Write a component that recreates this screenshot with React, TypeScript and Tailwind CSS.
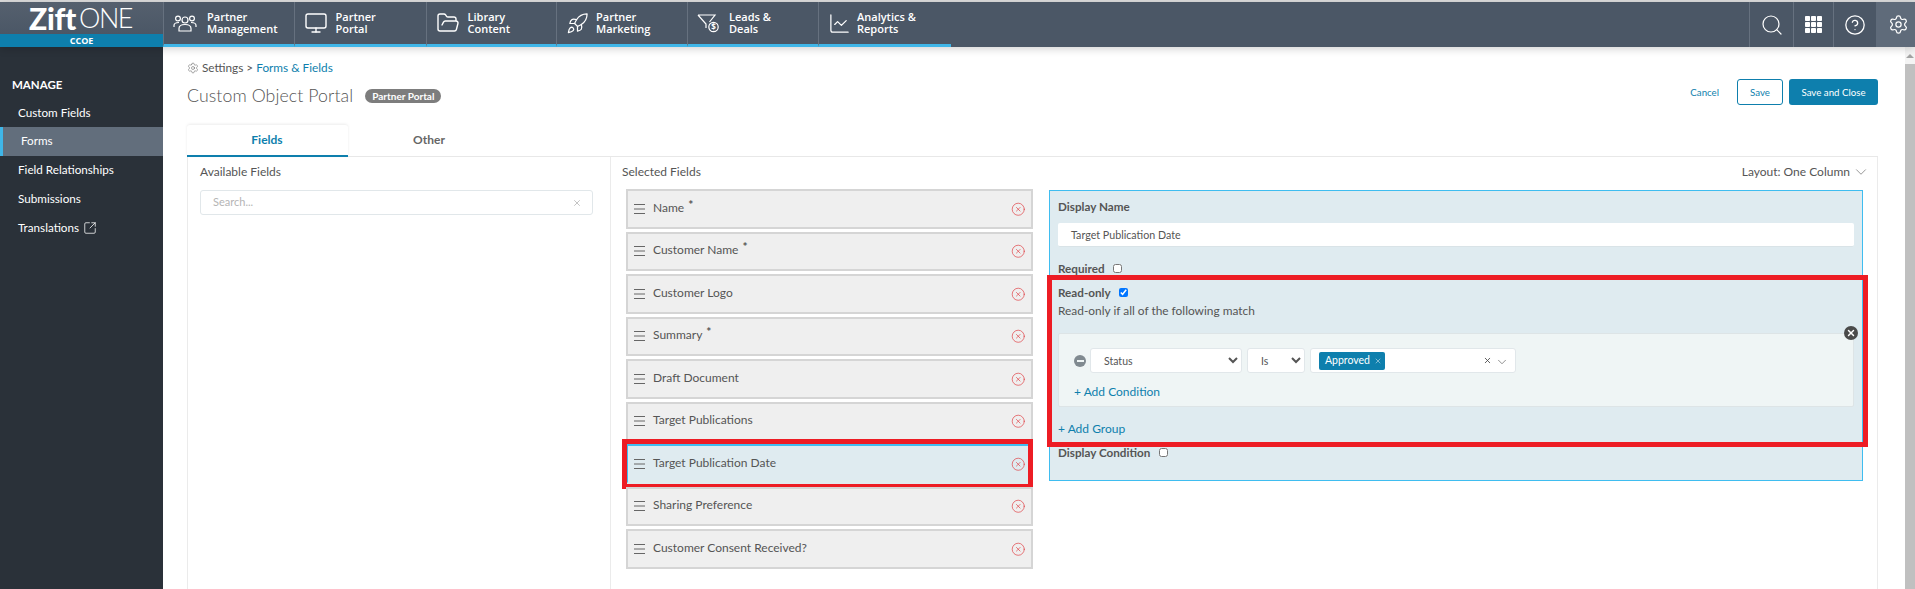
import React from "react";
import { Monitor, FolderOpen, Rocket, ChartLine, Search, CircleHelp, Settings, CircleX, SquareArrowOutUpRight, ChevronDown, X } from "lucide-react";

function PeopleIcon() {
  return (
    <svg width="24" height="20" viewBox="0 0 24 20" fill="none" stroke="#fff" strokeWidth="1.2">
      <circle cx="5" cy="5.5" r="2.4" /><circle cx="19" cy="5.5" r="2.4" /><circle cx="12" cy="7" r="3" />
      <path d="M6 18v-2.5c0-2.5 2.5-4 6-4s6 1.5 6 4V18z" />
      <path d="M1 14v-1.5C1 10.500 3 9.500 6 9.500M23 14v-1.500c0-2-2-3-5-3" />
    </svg>
  );
}
function FunnelIcon() {
  return (
    <svg width="22" height="20" viewBox="0 0 22 20" fill="none" stroke="#fff" strokeWidth="1.2">
      <path d="M1 2h17l-5.500 7M1 2l8 9v4" />
      <circle cx="16.500" cy="14" r="4.700" />
      <text x="16.500" y="17" textAnchor="middle" fontSize="8" fill="#fff" stroke="none" fontFamily="Open Sans, sans-serif" fontWeight="700">$</text>
    </svg>
  );
}
function GridIcon() {
  const cells = [0, 6, 12];
  return (
    <svg width="17" height="17" viewBox="0 0 17 17" fill="#fff">
      {cells.map((y) => cells.map((x) => <rect key={`${x}-${y}`} x={x} y={y} width="5" height="5" rx="0.8" />))}
    </svg>
  );
}
function Grip() {
  return (
    <svg width="11" height="10" viewBox="0 0 11 10" stroke="#666" strokeWidth="1" className="shrink-0">
      <path d="M0 .5h11M0 5h11M0 9.500h11" />
    </svg>
  );
}

const navItems = [
  { w: "w-[130.500px]", icon: <PeopleIcon />, gap: "w-[34px]", a: "Partner", b: "Management" },
  { w: "w-[132px]", icon: <Monitor size={24} strokeWidth={1.4} color="#fff" />, gap: "w-[32px]", a: "Partner", b: "Portal" },
  { w: "w-[130.500px]", icon: <FolderOpen size={24} strokeWidth={1.4} color="#fff" />, gap: "w-[32px]", a: "Library", b: "Content" },
  { w: "w-[131px]", icon: <Rocket size={23} strokeWidth={1.3} color="#fff" />, gap: "w-[30px]", a: "Partner", b: "Marketing" },
  { w: "w-[131px]", icon: <FunnelIcon />, gap: "w-[32px]", a: "Leads &", b: "Deals" },
  { w: "w-[133px]", icon: <ChartLine size={23} strokeWidth={1.3} color="#fff" />, gap: "w-[29px]", a: "Analytics &", b: "Reports" },
];

const fields = [
  { name: "Name", req: true },
  { name: "Customer Name", req: true },
  { name: "Customer Logo" },
  { name: "Summary", req: true },
  { name: "Draft Document" },
  { name: "Target Publications" },
  { name: "Target Publication Date", active: true },
  { name: "Sharing Preference" },
  { name: "Customer Consent Received?" },
];

function FieldRow({ name, req, active }: { name: string; req?: boolean; active?: boolean }) {
  return (
    <div className={`relative flex h-[39.500px] mb-[3px] items-center border-2 pl-[6px] pr-[6px] ${active ? "bg-[#dfebf0] border-[#3fbdf0] border-b-[#dfebf0]" : "bg-[#efefef] border-[#d5d5d5]"}`}>
      <Grip />
      <span className="ml-[8px] text-[12px] leading-none text-[#555] -mt-[2px]">{name}</span>
      {req && <span className="ml-[4px] -mt-[8px] text-[12px] leading-none font-bold text-[#555]">*</span>}
      <CircleX size={14.500} strokeWidth={1.1} color="#e0393e" className="ml-auto" />
      {active && <div className="absolute -left-[6px] -right-[2px] -top-[7px] -bottom-[7px] border-[5px] border-[#ed1c24]" />}
    </div>
  );
}

export default function App() {
  return (
    <div className="h-screen overflow-hidden bg-white font-['Lato',sans-serif] text-[#555] flex flex-col">
      <div className="h-[2px] bg-[#dcdcdc]" />
      <header className="relative z-10 flex h-[45px] bg-[#4b5766] shadow-[0_2px_8px_rgba(0,0,0,0.18)] text-white">
        <div className="w-[163px] shrink-0 flex flex-col">
          <div className="h-[32px] flex justify-center items-center leading-[30px] pr-[2px] bg-gradient-to-b from-[#55606e] to-[#4b5766]">
            <span className="text-[30px] font-black tracking-[-0.3px]">Zift</span>
            <span className="text-[27px] font-light tracking-[-1.5px] ml-[3px]">ONE</span>
          </div>
          <div className="h-[13px] bg-[#0e7fad] text-center text-[9px] font-bold leading-[13px] font-['Open_Sans',sans-serif]">CCOE</div>
        </div>
        {navItems.map((n) => (
          <div key={n.b} className={`${n.w} shrink-0 flex items-center border-l border-[#66717f] border-b-[3px] border-b-[#3fb6e8] pl-[9px]`}>
            <div className={`${n.gap} shrink-0`}>{n.icon}</div>
            <div className="font-['Open_Sans',sans-serif] text-[11px] font-semibold leading-[12px]">
              <div>{n.a}</div>
              <div>{n.b}</div>
            </div>
          </div>
        ))}
        <div className="ml-auto flex h-full">
          <div className="w-[44px] flex items-center justify-center border-l border-[#66717f]"><Search size={24} strokeWidth={1.2} /></div>
          <div className="w-[40px] flex items-center justify-center border-l border-[#66717f]"><GridIcon /></div>
          <div className="w-[43px] flex items-center justify-center border-l border-[#66717f]"><CircleHelp size={22} strokeWidth={1.4} /></div>
          <div className="w-[39px] pl-[6px] flex items-center justify-center bg-[#5f6b7a]"><Settings size={21} strokeWidth={1.4} /></div>
        </div>
      </header>

      <div className="flex flex-1 min-h-0">
        <aside className="w-[163px] shrink-0 bg-[#2a3139] text-white text-[11.700px]">
          <div className="pl-[12px] pt-[31px] pb-[8px] text-[11.500px] font-bold leading-[14px]">MANAGE</div>
          <div className="pl-[18px] pb-[1px] h-[27px] flex items-center">Custom Fields</div>
          <div className="h-[29px] pb-[1px] flex items-center bg-[#626e7c] border-l-[3px] border-[#3fb6e8] pl-[18px]">Forms</div>
          <div className="pl-[18px] pb-[1px] h-[29px] flex items-center">Field Relationships</div>
          <div className="pl-[18px] pb-[1px] h-[29px] flex items-center">Submissions</div>
          <div className="pl-[18px] pb-[1px] h-[29px] flex items-center gap-[4px]">Translations <SquareArrowOutUpRight size={14} strokeWidth={1.3} /></div>
        </aside>

        <main className="flex-1 min-w-0 pl-[24px] pr-[27px] flex flex-col">
          <div className="mt-[13px] h-[16px] flex items-center text-[11.800px] text-[#555]">
            <Settings size={12} strokeWidth={1} className="mr-[3px]" />
            <span>Settings &gt; </span>
            <span className="ml-[3px] text-[#0e7fad]">Forms &amp; Fields</span>
          </div>
          <div className="mt-[3px] flex h-[26px]">
            <div className="mt-[3px] flex items-center h-[28px]">
              <span className="text-[17.700px] font-light text-[#555] tracking-[0.1px]">Custom Object Portal</span>
              <span className="ml-[12px] rounded-full bg-[#7d7d7d] text-white text-[10px] font-bold h-[14px] leading-[14px] px-[7px]">Partner Portal</span>
            </div>
            <div className="ml-auto flex items-center text-[9.700px]">
              <span className="text-[#0e7fad]">Cancel</span>
              <button className="ml-[18px] w-[46px] h-[26px] rounded-[3px] border border-[#0e7fad] text-[#0e7fad]">Save</button>
              <button className="ml-[6px] w-[89px] h-[26px] rounded-[3px] bg-[#0e7fad] text-white">Save and Close</button>
            </div>
          </div>

          <div className="mt-[20px] flex h-[32px] border-b border-[#e8e8e8] text-[12px] font-bold">
            <div className="w-[161px] h-[32px] pb-[1px] pr-[1px] flex items-center justify-center border-b-2 border-[#0e7fad] text-[#0e7fad] rounded-t-[3px] shadow-[0_-1px_3px_rgba(0,0,0,0.08)]">Fields</div>
            <div className="w-[162px] pb-[1px] flex items-center justify-center text-[#666]">Other</div>
          </div>

          <div className="flex flex-1 min-h-0 border-x border-[#ebebeb] text-[12px]">
            <section className="w-[422px] shrink-0 px-[12px] pt-[8px]">
              <div className="h-[14px] leading-[14px]">Available Fields</div>
              <div className="mt-[11px] h-[25px] w-[393px] rounded-[3px] border border-[#e1e7ea] flex items-center pl-[12px] pr-[10px] text-[11px] text-[#b5b5b5]">
                <span>Search...</span>
                <X size={10} strokeWidth={1.2} color="#888" className="ml-auto" />
              </div>
            </section>
            <section className="flex-1 min-w-0 border-l border-[#ebebeb] pt-[8px] pr-[14px]">
              <div className="flex h-[14px] leading-[14px] pl-[11px]">
                <span>Selected Fields</span>
                <span className="ml-auto -mr-[7px] flex items-center gap-[2px]">Layout: One Column <ChevronDown size={18} strokeWidth={0.9} color="#666" /></span>
              </div>
              <div className="mt-[10px] flex pl-[15px] gap-[16px]">
                <div className="w-[407px] shrink-0">
                  {fields.map((f) => <FieldRow key={f.name} {...f} />)}
                </div>
                <div className="flex-1 mt-[1px] h-[291px] border border-[#3fbdf0] bg-[#dfebf0] px-[8px]">
                  <div className="pt-[8px] font-bold text-[11.700px] leading-[15px]">Display Name</div>
                  <div className="mt-[9px] h-[24px] rounded-[2px] bg-white pl-[13px] pt-[1px] flex items-center text-[10.700px] border-b border-[#d9e3e7]">Target Publication Date</div>
                  <div className="mt-[14px] h-[15px] flex items-center font-bold text-[11.700px]">
                    Required
                    <input type="checkbox" className="ml-[8px] h-[9px] w-[9px]" readOnly />
                  </div>
                  <div className="relative -mt-[1px] pt-[3px] -mx-[8px] px-[8px] h-[172px]">
                    <div className="absolute -left-[3px] -right-[6px] top-0 bottom-0 border-[5px] border-[#ed1c24] pointer-events-none" />
                    <div className="mt-[7px] h-[15px] flex items-center font-bold text-[11.700px]">
                      Read-only
                      <input type="checkbox" defaultChecked className="ml-[8px] h-[9px] w-[9px]" />
                    </div>
                    <div className="mt-[3px] h-[15px] leading-[15px] text-[11.900px]">Read-only if all of the following match</div>
                    <div className="relative mt-[15px] h-[74px] rounded-[2px] border border-[#dde4e6] bg-[#eff5f5] pl-[15px] pt-[14px]">
                      <div className="absolute -right-[5px] -top-[8px] h-[14px] w-[14px] rounded-full bg-[#4a4a4a] flex items-center justify-center">
                        <X size={10} strokeWidth={3.5} color="#fff" />
                      </div>
                      <div className="flex items-center">
                        <div className="h-[12px] w-[12px] rounded-full bg-[#808a90] flex items-center justify-center shrink-0">
                          <div className="h-[2px] w-[7px] bg-[#eff5f5]" />
                        </div>
                        <select className="ml-[4px] h-[25px] w-[152px] rounded-[3px] border border-[#e1e7ea] bg-white pl-[9px] text-[10.500px]" defaultValue="Status"><option>Status</option></select>
                        <select className="ml-[5px] h-[25px] w-[58px] rounded-[3px] border border-[#e1e7ea] bg-white pl-[9px] text-[10.500px]" defaultValue="Is"><option>Is</option></select>
                        <div className="ml-[5px] h-[25px] w-[206px] rounded-[3px] border border-[#e1e7ea] bg-white pl-[8px] pr-[6px] flex items-center">
                          <span className="h-[18px] w-[66px] rounded-[2px] bg-[#0e7fad] text-white text-[10.500px] flex items-center pl-[6px] gap-[4px]">Approved <X size={8} strokeWidth={1.4} /></span>
                          <X size={9} strokeWidth={2.2} color="#444" className="ml-auto" />
                          <ChevronDown size={14} strokeWidth={1.1} color="#555" className="ml-[3px] mt-[3px]" />
                        </div>
                      </div>
                      <div className="mt-[11px] text-[#0e7fad] text-[12px] leading-[15px]">+ Add Condition</div>
                    </div>
                    <div className="mt-[14px] text-[#0e7fad] text-[12px] leading-[15px]">+ Add Group</div>
                  </div>
                  <div className="-mt-[2px] h-[15px] flex items-center font-bold text-[11.700px]">
                    Display Condition
                    <input type="checkbox" className="ml-[9px] h-[9px] w-[9px]" readOnly />
                  </div>
                </div>
              </div>
            </section>
          </div>
        </main>

        <div className="w-[10px] shrink-0 bg-[#f4f4f4] flex flex-col items-center">
          <div className="h-[17px] flex items-center justify-center">
            <div className="h-0 w-0 border-x-[4px] border-b-[4px] border-x-transparent border-b-[#a3a3a3]" />
          </div>
          <div className="flex-1 w-full bg-[#c0c0c0]" />
        </div>
      </div>
    </div>
  );
}
